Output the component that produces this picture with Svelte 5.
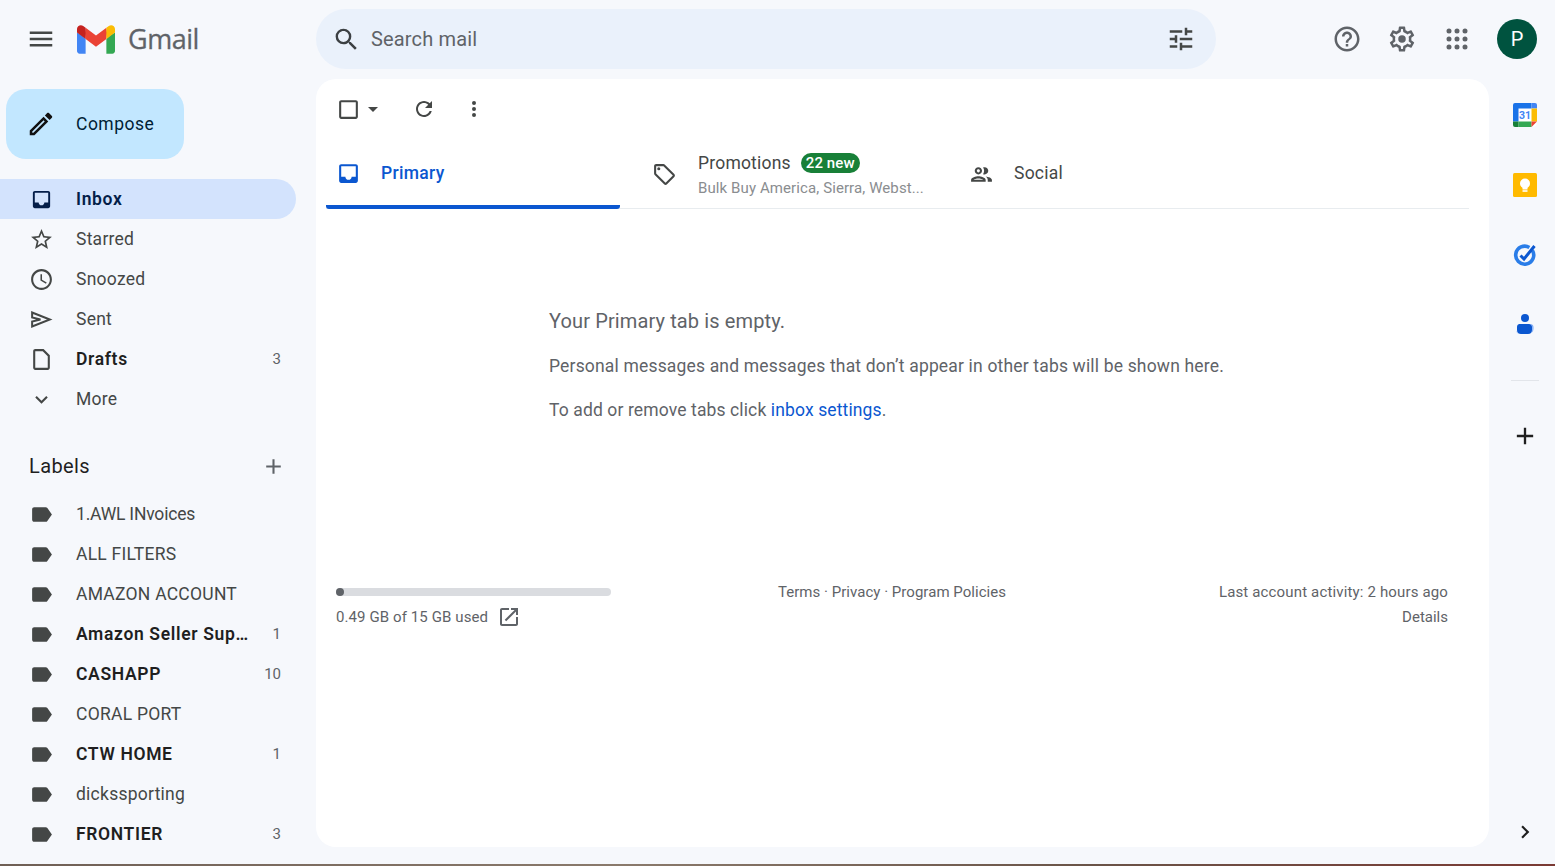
<script>
  // 3x3 launcher dots, spelled out so the radius is easy to tweak
  const dot = (x, y) => `M${x - 2.5} ${y}a2.5 2.5 0 1 0 5 0a2.5 2.5 0 1 0-5 0z`;
  const appsPath = [4, 12, 20].flatMap((y) => [4, 12, 20].map((x) => dot(x, y))).join("");

  const P = {
    menu: "M3 18h18v-2H3v2zm0-5h18v-2H3v2zm0-7v2h18V6H3z",
    search: "M15.5 14h-.79l-.28-.27A6.471 6.471 0 0 0 16 9.5 6.5 6.5 0 1 0 9.5 16c1.61 0 3.09-.59 4.23-1.57l.27.28v.79l5 4.99L20.49 19l-4.99-5zm-6 0C7.01 14 5 11.99 5 9.5S7.01 5 9.5 5 14 7.01 14 9.5 11.99 14 9.5 14z",
    tune: "M3 17v2h6v-2H3zM3 5v2h10V5H3zm10 16v-2h8v-2h-8v-2h-2v6h2zM7 9v2H3v2h4v2h2V9H7zm14 4v-2H11v2h10zm-6-4h2V7h4V5h-4V3h-2v6z",
    help: "M11 18h2v-2h-2v2zm1-16C6.48 2 2 6.48 2 12s4.48 10 10 10 10-4.48 10-10S17.52 2 12 2zm0 18c-4.41 0-8-3.59-8-8s3.59-8 8-8 8 3.59 8 8-3.59 8-8 8zm0-14c-2.21 0-4 1.79-4 4h2c0-1.1.9-2 2-2s2 .9 2 2c0 2-3 1.75-3 5h2c0-2.25 3-2.5 3-5 0-2.21-1.79-4-4-4z",
    gear: "M19.43 12.98c.04-.32.07-.64.07-.98 0-.34-.03-.66-.07-.98l2.11-1.65c.19-.15.24-.42.12-.64l-2-3.46c-.09-.16-.26-.25-.44-.25-.06 0-.12.01-.17.03l-2.49 1c-.52-.4-1.08-.73-1.69-.98l-.38-2.65C14.46 2.18 14.25 2 14 2h-4c-.25 0-.46.18-.49.42l-.38 2.65c-.61.25-1.17.59-1.69.98l-2.49-1c-.06-.02-.12-.03-.18-.03-.17 0-.34.09-.43.25l-2 3.46c-.13.22-.07.49.12.64l2.11 1.65c-.04.32-.07.65-.07.98 0 .33.03.66.07.98l-2.11 1.65c-.19.15-.24.42-.12.64l2 3.46c.09.16.26.25.44.25.06 0 .12-.01.17-.03l2.49-1c.52.4 1.08.73 1.69.98l.38 2.65c.03.24.24.42.49.42h4c.25 0 .46-.18.49-.42l.38-2.65c.61-.25 1.17-.59 1.69-.98l2.49 1c.06.02.12.03.18.03.17 0 .34-.09.43-.25l2-3.46c.12-.22.07-.49-.12-.64l-2.11-1.65zm-1.98-1.71c.04.31.05.52.05.73 0 .21-.02.43-.05.73l-.14 1.13.89.7 1.08.84-.7 1.21-1.27-.51-1.04-.42-.9.68c-.43.32-.84.56-1.25.73l-1.06.43-.16 1.13-.2 1.35h-1.4l-.19-1.35-.16-1.13-1.06-.43c-.43-.18-.83-.41-1.23-.71l-.91-.7-1.06.43-1.27.51-.7-1.21 1.08-.84.89-.7-.14-1.13c-.03-.31-.05-.54-.05-.74s.02-.43.05-.73l.14-1.13-.89-.7-1.08-.84.7-1.21 1.27.51 1.04.42.9-.68c.43-.32.84-.56 1.25-.73l1.06-.43.16-1.13.2-1.35h1.39l.19 1.35.16 1.13 1.06.43c.43.18.83.41 1.23.71l.91.7 1.06-.43 1.27-.51.7 1.21-1.07.85-.89.7.14 1.13zM12 9a3 3 0 1 0 0 6 3 3 0 0 0 0-6z",
    edit: "M3 17.25V21h3.75L17.81 9.94l-3.75-3.75L3 17.25zM5.92 19H5v-.92l9.06-9.06.92.92L5.92 19zM20.71 7.04c.39-.39.39-1.02 0-1.41l-2.34-2.34c-.2-.2-.45-.29-.71-.29s-.51.1-.7.29l-1.83 1.83 3.75 3.75 1.83-1.83z",
    inbox: "M19 3H5c-1.1 0-2 .9-2 2v14c0 1.1.9 2 2 2h14c1.1 0 2-.9 2-2V5c0-1.1-.9-2-2-2zm0 12h-4c0 1.66-1.35 3-3 3s-3-1.34-3-3H5V5h14v10z",
    star: "M22 9.24l-7.19-.62L12 2 9.19 8.63 2 9.24l5.46 4.73L5.82 21 12 17.27 18.18 21l-1.63-7.03L22 9.24zM12 15.4l-3.76 2.27 1-4.28-3.32-2.88 4.38-.38L12 6.1l1.71 4.04 4.38.38-3.32 2.88 1 4.28L12 15.4z",
    clock: "M11.99 2C6.47 2 2 6.48 2 12s4.47 10 9.99 10C17.52 22 22 17.52 22 12S17.52 2 11.99 2zM12 20c-4.42 0-8-3.58-8-8s3.58-8 8-8 8 3.58 8 8-3.58 8-8 8zm.5-13H11v6l5.25 3.15.75-1.23-4.5-2.67z",
    send: "M3 5.3L20 12L3 18.7V14L11 12L3 10Z",
    draft: "M14 2H6c-1.1 0-2 .9-2 2v16c0 1.1.9 2 2 2h12c1.1 0 2-.9 2-2V8l-6-6zM18 20H6V4h7.17L18 8.83V20z",
    down: "M16.59 8.59L12 13.17 7.41 8.59 6 10l6 6 6-6z",
    label: "M17.63 5.84C17.27 5.33 16.67 5 16 5L5 5.01C3.9 5.01 3 5.9 3 7v10c0 1.1.9 1.99 2 1.99L16 19c.67 0 1.27-.33 1.63-.84L22 12l-4.37-6.16z",
    add: "M19 13h-6v6h-2v-6H5v-2h6V5h2v6h6v2z",
    refresh: "M17.65 6.35C16.2 4.9 14.21 4 12 4c-4.42 0-7.99 3.58-7.99 8s3.57 8 7.99 8c3.73 0 6.84-2.55 7.73-6h-2.08c-.82 2.33-3.04 4-5.65 4-3.31 0-6-2.69-6-6s2.69-6 6-6c1.66 0 3.14.69 4.22 1.78L13 11h7V4l-2.35 2.35z",
    tag: "M21.41 11.58l-9-9C12.05 2.22 11.55 2 11 2H4c-1.1 0-2 .9-2 2v7c0 .55.22 1.05.59 1.42l9 9c.36.36.86.58 1.41.58.55 0 1.05-.22 1.41-.59l7-7c.37-.36.59-.86.59-1.41 0-.55-.23-1.06-.59-1.42zM13 20.01L4 11V4h7v-.01l9 9-7 7.02zM6.5 5a1.5 1.5 0 1 0 0 3 1.5 1.5 0 0 0 0-3z",
    people: "M9 13.75c-2.34 0-7 1.17-7 3.5V19h14v-1.75c0-2.33-4.66-3.5-7-3.5zM4.34 17c.84-.58 2.87-1.25 4.66-1.25s3.82.67 4.66 1.25H4.34zM9 12c1.93 0 3.5-1.57 3.5-3.5S10.93 5 9 5 5.5 6.57 5.5 8.5 7.07 12 9 12zm0-5c.83 0 1.5.67 1.5 1.5S9.83 10 9 10s-1.5-.67-1.5-1.5S8.17 7 9 7zm7.04 6.81c1.16.84 1.96 1.96 1.96 3.44V19h4v-1.75c0-2.02-3.5-3.17-5.96-3.44zM15 12c1.93 0 3.5-1.57 3.5-3.5S16.93 5 15 5c-.54 0-1.04.13-1.5.35.63.89 1 1.98 1 3.15s-.37 2.26-1 3.15c.46.22.96.35 1.5.35z",
    open: "M19 19H5V5h7V3H5c-1.11 0-2 .9-2 2v14c0 1.1.89 2 2 2h14c1.1 0 2-.9 2-2v-7h-2v7zM14 3v2h3.59l-9.83 9.83 1.41 1.41L19 6.41V10h2V3h-7z",
    right: "M10 6L8.59 7.41 13.17 12l-4.58 4.59L10 18l6-6z",
    box: "M19 5v14H5V5h14m0-2H5c-1.1 0-2 .9-2 2v14c0 1.1.9 2 2 2h14c1.1 0 2-.9 2-2V5c0-1.1-.9-2-2-2z",
    caret: "M7 10l5 5 5-5z",
    more: "M12 8a2 2 0 1 0 0-4 2 2 0 0 0 0 4zm0 2a2 2 0 1 0 0 4 2 2 0 0 0 0-4zm0 6a2 2 0 1 0 0 4 2 2 0 0 0 0-4z",
    apps: appsPath
  };

  const nav = [
    { name: "Inbox", icon: P.inbox, active: true, bold: true, cls: "inbox" },
    { name: "Starred", icon: P.star },
    { name: "Snoozed", icon: P.clock },
    { name: "Sent", icon: P.send, cls: "sent" },
    { name: "Drafts", icon: P.draft, bold: true, count: "3" },
    { name: "More", icon: P.down }
  ];

  const labels = [
    { name: "1.AWL INvoices", tight: true },
    { name: "ALL FILTERS" },
    { name: "AMAZON ACCOUNT" },
    { name: "Amazon Seller Sup…", bold: true, count: "1" },
    { name: "CASHAPP", bold: true, count: "10" },
    { name: "CORAL PORT" },
    { name: "CTW HOME", bold: true, count: "1" },
    { name: "dickssporting" },
    { name: "FRONTIER", bold: true, count: "3" }
  ];
</script>

{#snippet icon(d, cls = "")}
  <svg class="icon {cls}" viewBox="0 0 24 24" aria-hidden="true"><path {d} /></svg>
{/snippet}

{#snippet row(item)}
  <div class="row" class:active={item.active} class:bold={item.bold} class:tight={item.tight}>
    <span class="row-icon">{@render icon(item.icon, item.cls)}</span>
    <span class="row-name">{item.name}</span>
    {#if item.count}<span class="row-count">{item.count}</span>{/if}
  </div>
{/snippet}

<div class="app">
  <header class="brand">
    {@render icon(P.menu, "menu")}
    <svg class="logo" viewBox="0 0 256 193" aria-hidden="true">
      <path fill="#4285F4" d="M58.182 192.05V93.14L27.507 65.077 0 49.504v125.091c0 9.658 7.825 17.455 17.455 17.455h40.727Z" />
      <path fill="#34A853" d="M197.818 192.05h40.727c9.658 0 17.455-7.826 17.455-17.455V49.505l-31.156 17.837-27.026 25.798v98.91Z" />
      <path fill="#EA4335" d="m58.182 93.14-4.174-38.647 4.174-36.989L128 69.868l69.818-52.364 4.669 34.992-4.669 40.644L128 145.504z" />
      <path fill="#FBBC04" d="M197.818 17.504V93.14L256 49.504V26.231c0-21.585-24.64-33.89-41.89-20.945l-16.292 12.218Z" />
      <path fill="#C5221F" d="m0 49.504 26.759 20.07L58.182 93.14V17.504L41.89 5.286C24.61-7.66 0 4.646 0 26.23v23.273Z" />
    </svg>
    <span class="wordmark">Gmail</span>
  </header>

  <div class="topbar">
    <div class="search">
      {@render icon(P.search, "search-icon")}
      <span class="search-text">Search mail</span>
      {@render icon(P.tune, "tune")}
    </div>
    <div class="top-actions">
      {@render icon(P.help, "top-icon")}
      {@render icon(P.gear, "top-icon gear")}
      {@render icon(P.apps, "top-icon apps")}
      <span class="avatar">P</span>
    </div>
  </div>

  <aside class="sidebar">
    <button class="compose">
      {@render icon(P.edit, "pencil")}
      <span>Compose</span>
    </button>
    <nav class="nav">
      {#each nav as item}
        {@render row(item)}
      {/each}
    </nav>
    <div class="labels-head">
      <span>Labels</span>
      {@render icon(P.add, "labels-add")}
    </div>
    <div class="labels">
      {#each labels as item}
        {@render row({ ...item, icon: P.label })}
      {/each}
    </div>
  </aside>

  <main class="card">
    <div class="toolbar">
      {@render icon(P.box, "tool box")}
      {@render icon(P.caret, "tool caret")}
      {@render icon(P.refresh, "tool refresh")}
      {@render icon(P.more, "tool more")}
    </div>

    <div class="tabs">
      <div class="tab primary">
        {@render icon(P.inbox, "tab-icon")}
        <span>Primary</span>
      </div>
      <div class="tab promotions">
        {@render icon(P.tag, "tab-icon")}
        <div class="promo-text">
          <div class="promo-title"><span>Promotions</span><span class="badge">22 new</span></div>
          <div class="promo-sub">Bulk Buy America, Sierra, Webst...</div>
        </div>
      </div>
      <div class="tab social">
        {@render icon(P.people, "tab-icon")}
        <span>Social</span>
      </div>
    </div>

    <section class="empty">
      <h2>Your Primary tab is empty.</h2>
      <p>Personal messages and messages that don’t appear in other tabs will be shown here.</p>
      <p class="hint">To add or remove tabs click <a href="#settings">inbox settings</a>.</p>
    </section>

    <footer class="foot">
      <div class="storage">
        <div class="bar"><div class="bar-fill"></div></div>
        <div class="used"><span>0.49 GB of 15 GB used</span>{@render icon(P.open, "open")}</div>
      </div>
      <div class="terms">Terms · Privacy · Program Policies</div>
      <div class="activity">
        <div>Last account activity: 2 hours ago</div>
        <div class="details">Details</div>
      </div>
    </footer>
  </main>

  <aside class="rail">
    <div class="rail-item">
      <svg class="app-icon" viewBox="0 0 24 24" aria-hidden="true">
        <rect x="0.5" y="0.5" width="23" height="23" rx="2" fill="#fff" />
        <path fill="#1a73e8" d="M2 0h16.5v5.5h-13v13H0V2a2 2 0 0 1 2-2z" />
        <path fill="#4285f4" d="M18.5 0H22a2 2 0 0 1 2 2v3.5h-5.5z" />
        <path fill="#fbbc04" d="M18.5 5.5H24v13h-5.5z" />
        <path fill="#34a853" d="M5.5 18.5h13V24h-13z" />
        <path fill="#188038" d="M0 18.5h5.5V24H2a2 2 0 0 1-2-2z" />
        <path fill="#ea4335" d="M18.5 18.5H24L18.5 24z" />
        <text x="12" y="15.6" class="cal-num">31</text>
      </svg>
    </div>
    <div class="rail-item">
      <svg class="app-icon" viewBox="0 0 24 24" aria-hidden="true">
        <rect width="24" height="24" rx="1.5" fill="#ffba00" />
        <circle cx="12" cy="10.5" r="5" fill="#fff" />
        <rect x="9.5" y="14" width="5" height="2.5" fill="#fff" />
        <rect x="9.5" y="17.2" width="5" height="1.6" fill="#fff" />
      </svg>
    </div>
    <div class="rail-item">
      <svg class="app-icon" viewBox="0 0 24 24" aria-hidden="true">
        <path fill="none" stroke="#2a7de8" stroke-width="3.6" d="M19.4 7.5a9 9 0 1 1-3-3" />
        <path fill="none" stroke="#0b57d0" stroke-width="3" d="M7.5 12.5l3.5 3.5L21.5 3" />
      </svg>
    </div>
    <div class="rail-item">
      <svg class="app-icon" viewBox="0 0 24 24" aria-hidden="true">
        <circle cx="12" cy="5" r="4" fill="#0b57d0" />
        <path fill="#0b57d0" d="M6 11h10a3 3 0 0 1 3 3v3a4 4 0 0 1-4 4H8a4 4 0 0 1-4-4v-3a3 3 0 0 1 2-3z" />
        <path fill="#7baaf7" d="M3.5 17.5a4 4 0 0 0 4 3.5H6a3 3 0 0 1-2.5-3.5zM17 11a3 3 0 0 1 3.5 3v2a5 5 0 0 1-2 4c.6-1 .7-2 .7-3v-3A3 3 0 0 0 17 11z" />
      </svg>
    </div>
    <div class="rail-sep"></div>
    {@render icon(P.add, "rail-add")}
    {@render icon(P.right, "rail-next")}
  </aside>

  <div class="strip"></div>
</div>

<style>
  :global(body) {
    margin: 0;
    background: #f6f8fc;
  }

  .app {
    display: grid;
    grid-template-columns: 316px 1fr 66px;
    grid-template-rows: 79px 785px 2px;
    width: 1555px;
    height: 866px;
    overflow: hidden;
    background: #f6f8fc;
    color: #444746;
    font-family: Roboto, "Liberation Sans", sans-serif;
    font-size: 17.5px;
  }

  .icon {
    display: block;
    width: 25px;
    height: 25px;
    flex: none;
    fill: currentColor;
  }

  /* header */
  .brand {
    display: flex;
    align-items: center;
    padding: 0 0 1px 26px;
  }
  .brand :global(.menu) {
    width: 30px;
    height: 30px;
    color: #444746;
  }
  .logo {
    width: 38px;
    height: 29px;
    margin-left: 21px;
    flex: none;
  }
  .wordmark {
    margin-left: 13px;
    margin-top: -1px;
    font-family: "Open Sans", Roboto, sans-serif;
    font-size: 27px;
    letter-spacing: -0.5px;
    color: #5f6368;
    -webkit-text-stroke: 0.3px #5f6368;
  }

  .topbar {
    grid-column: 2 / 4;
    display: flex;
    align-items: center;
    padding-bottom: 1px;
  }
  .search {
    display: flex;
    align-items: center;
    width: 900px;
    height: 60px;
    padding: 0 20px 0 16px;
    box-sizing: border-box;
    border-radius: 30px;
    background: #eaf1fb;
  }
  .search :global(.search-icon) {
    width: 29px;
    height: 29px;
    color: #3c4043;
  }
  .search :global(.tune) {
    width: 30px;
    height: 30px;
    color: #444746;
  }
  .search-text {
    flex: 1;
    margin-left: 10px;
    font-size: 20px;
    letter-spacing: 0.15px;
    color: #5f6368;
  }
  .top-actions {
    display: flex;
    align-items: center;
    margin-left: 116px;
    color: #5f6368;
  }
  .top-actions :global(.top-icon) {
    width: 30px;
    height: 30px;
    margin-right: 25px;
  }
  .top-actions :global(.apps) {
    width: 24px;
    height: 24px;
    margin-left: 3px;
    margin-right: 28px;
  }
  .avatar {
    width: 40px;
    height: 40px;
    border-radius: 50%;
    background: #00533f;
    color: #fff;
    font-size: 20px;
    display: flex;
    align-items: center;
    justify-content: center;
  }

  /* sidebar */
  .sidebar {
    grid-row: 2;
    overflow: hidden;
    padding-top: 10px;
    box-sizing: border-box;
  }
  .compose {
    display: flex;
    align-items: center;
    width: 178px;
    height: 70px;
    margin: 0 0 20px 6px;
    padding: 0 0 0 20px;
    border: 0;
    border-radius: 20px;
    background: #c2e7ff;
    color: #001d35;
    font: 400 17.5px Roboto, sans-serif;
    letter-spacing: 0.5px;
  }
  .compose :global(.pencil) {
    width: 30px;
    height: 30px;
    margin-right: 20px;
    color: #111;
  }
  .row {
    display: flex;
    align-items: center;
    width: 296px;
    height: 40px;
    padding: 0 15px 0 29px;
    box-sizing: border-box;
    border-radius: 0 20px 20px 0;
    color: #444746;
    font-size: 17.5px;
    letter-spacing: 0.25px;
  }
  .row.tight {
    letter-spacing: -0.2px;
  }
  .row.bold {
    color: #1f1f1f;
    font-weight: 600;
    letter-spacing: 0.65px;
  }
  .row.active {
    background: #d3e3fd;
    color: #041e49;
  }
  .row-icon {
    width: 25px;
    margin-right: 22px;
    color: #444746;
  }
  .row.active .row-icon {
    color: #041e49;
  }
  .row-icon :global(.inbox) {
    width: 23px;
    height: 23px;
    margin: 1px;
  }
  .row-icon :global(.sent path) {
    fill: none;
    stroke: currentColor;
    stroke-width: 1.9;
  }
  .row-name {
    flex: 1;
    min-width: 0;
    white-space: nowrap;
  }
  .row-count {
    margin-left: auto;
    font-size: 15px;
    font-weight: 400;
    letter-spacing: 0;
    color: #5f6368;
  }
  .labels-head {
    display: flex;
    align-items: center;
    justify-content: space-between;
    width: 296px;
    height: 40px;
    margin-top: 27px;
    margin-bottom: 8px;
    padding: 0 10px 0 29px;
    box-sizing: border-box;
    font-size: 20px;
    letter-spacing: 0.4px;
    color: #1f1f1f;
  }
  .labels-head :global(.labels-add) {
    width: 25px;
    height: 25px;
    color: #5f6368;
  }

  /* card */
  .card {
    grid-row: 2;
    margin-bottom: 17px;
    border-radius: 20px;
    background: #fff;
    display: flex;
    flex-direction: column;
  }
  .toolbar {
    display: flex;
    align-items: center;
    height: 60px;
    padding-left: 20px;
    color: #444746;
  }
  .toolbar :global(.box) {
    width: 25px;
    height: 25px;
  }
  .toolbar :global(.caret) {
    width: 24px;
    height: 24px;
  }
  .toolbar :global(.refresh) {
    width: 24px;
    height: 24px;
    margin-left: 27px;
  }
  .toolbar :global(.more) {
    width: 24px;
    height: 24px;
    margin-left: 26px;
  }
  .tabs {
    display: flex;
    height: 70px;
    margin: 0 20px 0 10px;
    border-bottom: 1px solid #e8ecef;
    box-sizing: border-box;
  }
  .tab {
    display: flex;
    align-items: center;
    height: 70px;
    box-sizing: border-box;
    color: #444746;
  }
  .tab :global(.tab-icon) {
    width: 25px;
    height: 25px;
  }
  .primary {
    width: 294px;
    padding: 2px 0 0 10px;
    border-bottom: 4px solid #0b57d0;
    border-radius: 0 0 3px 3px;
    color: #0b57d0;
    font-weight: 500;
  }
  .primary span {
    margin-left: 20px;
    letter-spacing: 0.3px;
  }
  .promotions {
    width: 323px;
    padding-left: 32px;
  }
  .promo-text {
    margin-left: 21px;
  }
  .promo-title {
    display: flex;
    align-items: center;
    height: 22px;
    letter-spacing: 0.2px;
  }
  .badge {
    margin-left: 10px;
    padding: 0 5px;
    height: 20px;
    line-height: 20px;
    border-radius: 10px;
    background: #188038;
    color: #fff;
    font-size: 15px;
    font-weight: 500;
    letter-spacing: 0.1px;
  }
  .promo-sub {
    margin-top: 5px;
    font-size: 15px;
    letter-spacing: 0.1px;
    color: #8a8d90;
    white-space: nowrap;
  }
  .social {
    padding: 0 0 2px 26px;
  }
  .social :global(.tab-icon) {
    margin-top: 2px;
  }
  .social span {
    margin-left: 20px;
    letter-spacing: 0.25px;
  }

  .empty {
    margin: 98px 0 0 233px;
    color: #5f6368;
  }
  .empty h2 {
    margin: 0;
    height: 28px;
    line-height: 28px;
    font-size: 20px;
    font-weight: 400;
    letter-spacing: 0.12px;
  }
  .empty p {
    margin: 20px 0 0;
    height: 24px;
    line-height: 24px;
    font-size: 17.5px;
    letter-spacing: 0.17px;
  }
  .empty p:first-of-type {
    margin-top: 19px;
  }
  .empty p.hint {
    letter-spacing: 0.12px;
  }
  .empty a {
    color: #0b57d0;
    text-decoration: none;
  }

  .foot {
    display: flex;
    align-items: flex-start;
    margin: 166px 41px 0 20px;
    color: #5f6368;
    font-size: 15px;
  }
  .storage {
    width: 275px;
  }
  .bar {
    height: 8px;
    border-radius: 4px;
    background: #dadce0;
  }
  .bar-fill {
    width: 8px;
    height: 8px;
    border-radius: 4px;
    background: #5f6368;
  }
  .used {
    display: flex;
    align-items: center;
    margin-top: 9px;
    height: 24px;
    letter-spacing: 0.1px;
  }
  .used :global(.open) {
    width: 24px;
    height: 24px;
    margin-left: 9px;
    color: #5f6368;
  }
  .terms {
    margin-left: 167px;
    margin-top: -5px;
    line-height: 18px;
    letter-spacing: 0.03px;
  }
  .activity {
    margin-left: auto;
    margin-top: -5px;
    text-align: right;
    line-height: 18px;
    letter-spacing: 0.15px;
  }
  .details {
    margin-top: 7px;
    letter-spacing: 0;
  }

  /* right rail */
  .rail {
    grid-row: 2;
    display: flex;
    flex-direction: column;
    align-items: center;
    padding: 1px 0 17px;
    box-sizing: border-box;
    width: 72px;
    color: #1f1f1f;
  }
  .rail-item {
    height: 70px;
    display: flex;
    align-items: center;
    justify-content: center;
  }
  .app-icon {
    width: 24px;
    height: 24px;
    display: block;
  }
  .cal-num {
    font: 700 10.5px Roboto, sans-serif;
    fill: #4285f4;
    text-anchor: middle;
  }
  .rail-sep {
    width: 28px;
    height: 1px;
    margin-top: 20px;
    background: #e2e5ea;
  }
  .rail :global(.rail-add) {
    width: 28px;
    height: 28px;
    margin-top: 41px;
  }
  .rail :global(.rail-next) {
    width: 26px;
    height: 26px;
    margin-top: auto;
    margin-bottom: 2px;
  }

  .strip {
    grid-column: 1 / 4;
    background: linear-gradient(90deg, #6f5f55, #8a7a6c 40%, #6a5448 70%, #7b3a34);
  }
</style>
